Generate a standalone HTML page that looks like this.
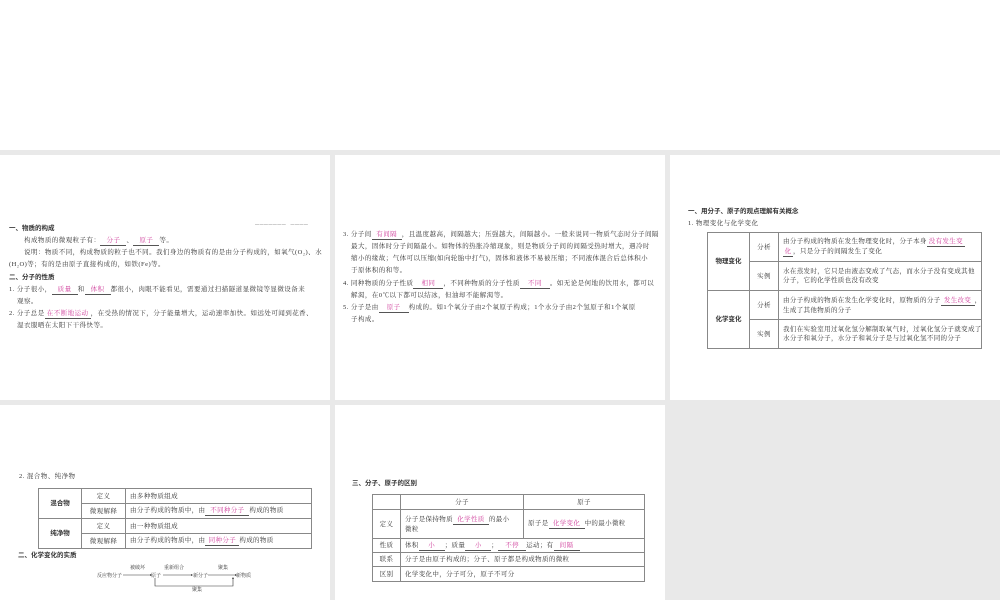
<!DOCTYPE html>
<html><head><meta charset="utf-8"><style>
*{margin:0;padding:0;box-sizing:border-box}
body{width:1000px;height:600px;background:#e9e9e9;position:relative;overflow:hidden;font-family:"Liberation Serif","Noto Serif CJK SC",serif;color:#333;font-size:6.5px}
.top{position:absolute;left:0;top:0;width:1000px;height:150px;background:#fff}
.p{position:absolute;background:#fff}
.t{position:absolute;white-space:nowrap;line-height:8px;letter-spacing:0.45px}
.b{font-family:"Liberation Sans","Noto Sans CJK SC",sans-serif;font-weight:bold}
.u{display:inline-block;border-bottom:0.7px solid #555;color:#d0409c;text-align:center}
table{position:absolute;border-collapse:collapse;border:1.2px solid #666;table-layout:fixed}
td{border:0.7px solid #888;font-size:6.5px;padding:0 4px;line-height:9px;white-space:nowrap;letter-spacing:0.35px;overflow:hidden}
.c{text-align:center}
</style></head><body>
<div class="top"></div>
<div class="p" style="left:0;top:155px;width:330px;height:245px"></div>
<div class="p" style="left:335px;top:155px;width:330px;height:245px"></div>
<div class="p" style="left:670px;top:155px;width:330px;height:245px"></div>
<div class="p" style="left:0;top:405px;width:330px;height:195px"></div>
<div class="p" style="left:335px;top:405px;width:330px;height:195px"></div>

<!-- panel 1 -->
<div class="t" style="left:255px;top:221px;color:#999;font-size:4px">━━━━━━━ &nbsp; ━━━━</div>
<div class="t b" style="left:9px;top:225px;letter-spacing:0">一、物质的构成</div>
<div class="t" style="left:24px;top:237px">构成物质的微观粒子有：<span class="u" style="width:26px">分子</span>、<span class="u" style="width:26px">原子</span>等。</div>
<div class="t" style="left:24px;top:249px">说明：物质不同，构成物质的粒子也不同。我们身边的物质有的是由分子构成的，如氧气(O₂)、水</div>
<div class="t" style="left:9px;top:261px">(H₂O)等；有的是由原子直接构成的，如铁(Fe)等。</div>
<div class="t b" style="left:9px;top:274px;letter-spacing:0">二、分子的性质</div>
<div class="t" style="left:9px;top:286px">1. 分子很小，<span class="u" style="width:26px">质量</span>和<span class="u" style="width:26px">体积</span>都很小，肉眼不能看见，需要通过扫描隧道显微镜等显微设备来</div>
<div class="t" style="left:17px;top:298px">观察。</div>
<div class="t" style="left:9px;top:310px">2. 分子总是<span class="u" style="width:46px">在不断地运动</span>，在受热的情况下，分子能量增大，运动速率加快。如远处可闻到花香、</div>
<div class="t" style="left:17px;top:322px">湿衣服晒在太阳下干得快等。</div>

<!-- panel 2 -->
<div class="t" style="left:343px;top:231px">3. 分子间<span class="u" style="width:30px">有间隔</span>，且温度越高，间隔越大；压强越大，间隔越小。一般来说同一物质气态时分子间隔</div>
<div class="t" style="left:351px;top:243px">最大，固体时分子间隔最小。如物体的热胀冷缩现象，则是物质分子间的间隔受热时增大，遇冷时</div>
<div class="t" style="left:351px;top:255px">缩小的缘故；气体可以压缩(如向轮胎中打气)，固体和液体不易被压缩；不同液体混合后总体积小</div>
<div class="t" style="left:351px;top:267px">于原体积的和等。</div>
<div class="t" style="left:343px;top:280px">4. 同种物质的分子性质<span class="u" style="width:30px">相同</span>，不同种物质的分子性质<span class="u" style="width:30px">不同</span>。如无论是何地的饮用水，都可以</div>
<div class="t" style="left:351px;top:292px">解渴，在0℃以下都可以结冰，但油却不能解渴等。</div>
<div class="t" style="left:343px;top:304px">5. 分子是由<span class="u" style="width:30px">原子</span>构成的。如1个氧分子由2个氧原子构成；1个水分子由2个氢原子和1个氧原</div>
<div class="t" style="left:351px;top:316px">子构成。</div>

<!-- panel 3 -->
<div class="t b" style="left:688px;top:208px;letter-spacing:0">一、用分子、原子的观点理解有关概念</div>
<div class="t" style="left:688px;top:220px">1. 物理变化与化学变化</div>
<table style="left:707px;top:232px;width:275px;height:116px">
<tr style="height:29px"><td rowspan="2" class="c b" style="width:42px;letter-spacing:0">物理变化</td><td class="c" style="width:29px">分析</td><td>由分子构成的物质在发生物理变化时，分子本身<span class="u" style="width:38px">没有发生变</span><br><span class="u" style="width:10px">化</span>，只是分子的间隔发生了变化</td></tr>
<tr style="height:29px"><td class="c">实例</td><td>水在蒸发时，它只是由液态变成了气态，而水分子没有变成其他<br>分子，它的化学性质也没有改变</td></tr>
<tr style="height:29px"><td rowspan="2" class="c b" style="letter-spacing:0">化学变化</td><td class="c">分析</td><td>由分子构成的物质在发生化学变化时，原物质的分子<span class="u" style="width:34px">发生改变</span>，<br>生成了其他物质的分子</td></tr>
<tr style="height:29px"><td class="c">实例</td><td>我们在实验室用过氧化氢分解制取氧气时，过氧化氢分子就变成了<br>水分子和氧分子，水分子和氧分子是与过氧化氢不同的分子</td></tr>
</table>

<!-- panel 4 -->
<div class="t" style="left:19px;top:473px">2. 混合物、纯净物</div>
<table style="left:38px;top:488px;width:274px;height:60px">
<tr style="height:15px"><td rowspan="2" class="c b" style="width:43px;letter-spacing:0">混合物</td><td class="c" style="width:44px">定义</td><td>由多种物质组成</td></tr>
<tr style="height:15px"><td class="c">微观解释</td><td>由分子构成的物质中，由<span class="u" style="width:44px">不同种分子</span>构成的物质</td></tr>
<tr style="height:15px"><td rowspan="2" class="c b" style="letter-spacing:0">纯净物</td><td class="c">定义</td><td>由一种物质组成</td></tr>
<tr style="height:15px"><td class="c">微观解释</td><td>由分子构成的物质中，由<span class="u" style="width:34px">同种分子</span>构成的物质</td></tr>
</table>
<div class="t b" style="left:18px;top:552px;letter-spacing:0">二、化学变化的实质</div>
<svg style="position:absolute;left:90px;top:563px" width="170" height="32">
<g font-size="5" fill="#333" font-family="Noto Serif CJK SC,serif">
<text x="7" y="14">反应物分子</text><text x="40" y="6">被破坏</text><text x="61" y="14">原子</text>
<text x="74" y="6">重新组合</text><text x="103" y="14">新分子</text><text x="128" y="6">聚集</text><text x="146" y="14">新物质</text>
<text x="102" y="28">聚集</text></g>
<g stroke="#333" stroke-width="0.6" fill="none"><line x1="33" y1="12" x2="60" y2="12"/><line x1="73" y1="12" x2="101" y2="12"/><line x1="118" y1="12" x2="145" y2="12"/>
<polyline points="65,15 65,23 143,23 143,15"/></g>
<g fill="#333"><path d="M60 11 L62 12 L60 13Z"/><path d="M101 11 L103 12 L101 13Z"/><path d="M145 11 L147 12 L145 13Z"/><path d="M142 16 L143 14 L144 16Z"/></g>
</svg>

<!-- panel 5 -->
<div class="t b" style="left:352px;top:480px;letter-spacing:0">三、分子、原子的区别</div>
<table style="left:372px;top:494px;width:273px;height:87px">
<tr style="height:15px"><td style="width:28px"></td><td class="c" style="width:123px">分子</td><td class="c">原子</td></tr>
<tr style="height:29px"><td class="c">定义</td><td>分子是保持物质<span class="u" style="width:36px">化学性质</span>的最小<br>微粒</td><td>原子是<span class="u" style="width:36px">化学变化</span>中的最小微粒</td></tr>
<tr style="height:14px"><td class="c">性质</td><td colspan="2">体积<span class="u" style="width:26px">小</span>；质量<span class="u" style="width:26px">小</span>；<span class="u" style="width:28px">不停</span>运动；有<span class="u" style="width:26px">间隔</span></td></tr>
<tr style="height:14px"><td class="c">联系</td><td colspan="2">分子是由原子构成的；分子、原子都是构成物质的微粒</td></tr>
<tr style="height:15px"><td class="c">区别</td><td colspan="2">化学变化中，分子可分，原子不可分</td></tr>
</table>
</body></html>
